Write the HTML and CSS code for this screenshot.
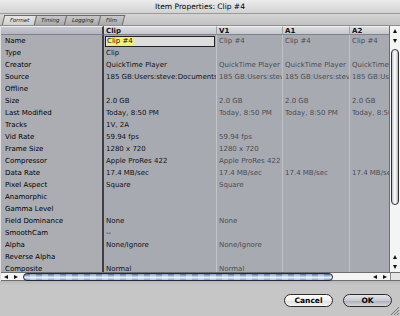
FILE: index.html
```html
<!DOCTYPE html>
<html lang="en">
<head>
    <meta charset="UTF-8">
    <title>Item Properties: Clip #4</title>
    <link rel="stylesheet" href="styles.css">
</head>
<body>
<div class="window">
    <div class="titlebar">Item Properties: Clip #4</div>

    <div class="tabbar">
        <span class="tab active">Format</span>
        <span class="tab">Timing</span>
        <span class="tab">Logging</span>
        <span class="tab">Film</span>
    </div>

    <div class="pane">
        <div class="grid-wrap">
            <div class="grid">
                <div class="hd lbl"></div>
                <div class="hd clip">Clip</div>
                <div class="hd">V1</div>
                <div class="hd">A1</div>
                <div class="hd">A2</div>

                <div class="lbl">Name</div>
                <div class="clip"><span class="field"><span class="hl">Clip #4</span></span></div>
                <div class="sub">Clip #4</div><div class="sub">Clip #4</div><div class="sub">Clip #4</div>

                <div class="lbl">Type</div>
                <div class="clip">Clip</div>
                <div class="sub"></div><div class="sub"></div><div class="sub"></div>

                <div class="lbl">Creator</div>
                <div class="clip">QuickTime Player</div>
                <div class="sub">QuickTime Player</div><div class="sub">QuickTime Player</div><div class="sub">QuickTime Player</div>

                <div class="lbl">Source</div>
                <div class="clip">185 GB:Users:steve:Documents</div>
                <div class="sub">185 GB:Users:steve:Documents</div><div class="sub">185 GB:Users:steve:Documents</div><div class="sub">185 GB:Users:steve:Documents</div>

                <div class="lbl">Offline</div>
                <div class="clip"></div>
                <div class="sub"></div><div class="sub"></div><div class="sub"></div>

                <div class="lbl">Size</div>
                <div class="clip">2.0 GB</div>
                <div class="sub">2.0 GB</div><div class="sub">2.0 GB</div><div class="sub">2.0 GB</div>

                <div class="lbl">Last Modified</div>
                <div class="clip">Today, 8:50 PM</div>
                <div class="sub">Today, 8:50 PM</div><div class="sub">Today, 8:50 PM</div><div class="sub">Today, 8:50 PM</div>

                <div class="lbl">Tracks</div>
                <div class="clip">1V, 2A</div>
                <div class="sub"></div><div class="sub"></div><div class="sub"></div>

                <div class="lbl">Vid Rate</div>
                <div class="clip">59.94 fps</div>
                <div class="sub">59.94 fps</div><div class="sub"></div><div class="sub"></div>

                <div class="lbl">Frame Size</div>
                <div class="clip">1280 x 720</div>
                <div class="sub">1280 x 720</div><div class="sub"></div><div class="sub"></div>

                <div class="lbl">Compressor</div>
                <div class="clip">Apple ProRes 422</div>
                <div class="sub">Apple ProRes 422</div><div class="sub"></div><div class="sub"></div>

                <div class="lbl">Data Rate</div>
                <div class="clip">17.4 MB/sec</div>
                <div class="sub">17.4 MB/sec</div><div class="sub">17.4 MB/sec</div><div class="sub">17.4 MB/sec</div>

                <div class="lbl">Pixel Aspect</div>
                <div class="clip">Square</div>
                <div class="sub">Square</div><div class="sub"></div><div class="sub"></div>

                <div class="lbl">Anamorphic</div>
                <div class="clip"></div>
                <div class="sub"></div><div class="sub"></div><div class="sub"></div>

                <div class="lbl">Gamma Level</div>
                <div class="clip"></div>
                <div class="sub"></div><div class="sub"></div><div class="sub"></div>

                <div class="lbl">Field Dominance</div>
                <div class="clip">None</div>
                <div class="sub">None</div><div class="sub"></div><div class="sub"></div>

                <div class="lbl">SmoothCam</div>
                <div class="clip">--</div>
                <div class="sub"></div><div class="sub"></div><div class="sub"></div>

                <div class="lbl">Alpha</div>
                <div class="clip">None/Ignore</div>
                <div class="sub">None/Ignore</div><div class="sub"></div><div class="sub"></div>

                <div class="lbl">Reverse Alpha</div>
                <div class="clip"></div>
                <div class="sub"></div><div class="sub"></div><div class="sub"></div>

                <div class="lbl">Composite</div>
                <div class="clip">Normal</div>
                <div class="sub">Normal</div><div class="sub"></div><div class="sub"></div>
            </div>

            <!-- vertical scroller, arrows at both ends -->
            <div class="vscroll">
                <span class="arrow up"></span>
                <span class="arrow down"></span>
                <span class="vthumb"></span>
                <span class="vtrack"></span>
                <span class="arrow up"></span>
                <span class="arrow down"></span>
            </div>
        </div>

        <div class="hscroll">
            <span class="harrow left"></span>
            <span class="harrow right"></span>
            <span class="hthumb"></span>
            <span class="htrack"></span>
            <span class="harrow left"></span>
            <span class="harrow right"></span>
            <span class="corner"></span>
        </div>
    </div>

    <div class="footer">
        <button class="btn">Cancel</button>
        <button class="btn default">OK</button>
        <span class="grip"></span>
    </div>
</div>
</body>
</html>
```

FILE: styles.css
```css
* { margin: 0; padding: 0; box-sizing: border-box; }
body {
    font-family: 'DejaVu Sans', Verdana, sans-serif;
    font-size: 7px;
    color: #000;
    background: #c4c4c4;
}
.window {
    width: 400px;
    height: 316px;
    display: flex;
    flex-direction: column;
    overflow: hidden;
    background: #c4c4c4;
}
.titlebar {
    height: 14px;
    line-height: 14px;
    text-align: center;
    font-size: 7.5px;
    background: linear-gradient(#ececec, #d2d2d2);
    border-bottom: 1px solid #9a9a9a;
}
.tabbar {
    height: 12px;
    display: flex;
    align-items: flex-end;
    padding-left: 3px;
    background: linear-gradient(#d4d4d4, #c2c2c2);
    border-bottom: 1px solid #8e8e8e;
}
.tab {
    height: 10px;
    line-height: 9px;
    font-size: 5.5px;
    padding: 0 6px;
    margin-right: -2px;
    color: #222;
    background: linear-gradient(#c8c8c8, #a9a9a9);
    border: 1px solid #6a6a6a;
    border-bottom: none;
    transform: skewX(-14deg);
}
.tab.active {
    background: linear-gradient(#e6e6e6, #cfcfcf);
    position: relative;
    z-index: 1;
}
.pane {
    display: flex;
    flex-direction: column;
    border-left: 1px solid #e0e0e0;
}
.grid-wrap {
    height: 246px;
    display: flex;
    overflow: hidden;
}
.grid {
    width: 389px;
    display: grid;
    grid-template-columns: 103px 113px 66px 67px 40px;
    grid-template-rows: 9px;
    grid-auto-rows: 12px;
    background: #a8aab1;
    overflow: hidden;
}
.grid > div {
    white-space: nowrap;
    overflow: hidden;
    line-height: 12px;
    padding-left: 2px;
    color: #4b4c53;
}
.grid > .lbl {
    padding-left: 4px;
    color: #000;
    background: #abadb3;
    border-right: 2px solid #3d3f45;
}
.grid > .clip { color: #111; border-right: 1px solid #c2c4ca; }
.grid > .sub { border-right: 1px solid #bfc1c7; }
.grid > .hd {
    line-height: 8px;
    font-weight: bold;
    color: #111;
    background: linear-gradient(#dcdde1, #c6c8cd);
    border-top: 1px solid #f0f0f2;
    border-bottom: 1px solid #80828a;
    border-right: 1px solid #9fa1a8;
}
.grid > .hd.lbl {
    background: linear-gradient(#c5c8cf, #b4b7bf);
    border-right: 2px solid #3d3f45;
}
.field {
    display: block;
    height: 11px;
    margin: 1px 1px 0 -1px;
    line-height: 9px;
    padding-left: 1px;
    background: #dedede;
    border: 1px solid #222;
}
.hl { background: #f4ee7a; }

.vscroll {
    width: 11px;
    display: flex;
    flex-direction: column;
    align-items: center;
    background: #f4f4f4;
    border-left: 1px solid #6e6e6e;
}
.arrow {
    width: 0;
    height: 0;
    margin: 3px 0;
    border-left: 2.5px solid transparent;
    border-right: 2.5px solid transparent;
}
.arrow.up { border-bottom: 4px solid #111; }
.arrow.down { border-top: 4px solid #111; }
.vthumb {
    width: 8px;
    height: 156px;
    margin-top: 3px;
    border: 1px solid #333;
    border-radius: 4px;
    background: linear-gradient(90deg, #bfc2c8, #fdfdfd 45%, #e8e9ec 70%, #a6a9b0);
}
.vtrack { flex: 1; }

.hscroll {
    height: 9px;
    display: flex;
    align-items: center;
    background: #f4f4f4;
    border-top: 1px solid #6e6e6e;
    border-bottom: 1px solid #6e6e6e;
}
.harrow {
    width: 0;
    height: 0;
    margin: 0 3px;
    border-top: 2.5px solid transparent;
    border-bottom: 2.5px solid transparent;
}
.harrow.left { border-right: 4px solid #111; }
.harrow.right { border-left: 4px solid #111; }
.hthumb {
    width: 310px;
    height: 8px;
    margin-left: 2px;
    border: 1px solid #1f2a3c;
    border-radius: 4px;
    background: repeating-linear-gradient(90deg, rgba(255,255,255,0) 0 6px, rgba(255,255,255,0.35) 6px 12px),
                linear-gradient(#4d6a98, #a8bfdf 35%, #e6eef8 60%, #7f9dc8);
}
.htrack { flex: 1; }
.corner {
    width: 10px;
    align-self: stretch;
    background: #e4e4e4;
    border-left: 1px solid #8a8a8a;
}

.footer {
    flex: 1;
    display: flex;
    justify-content: flex-end;
    align-items: flex-start;
    gap: 10px;
    padding: 13px 8px 0 0;
    position: relative;
    background: linear-gradient(#b8b8b8, #c6c6c6 4px);
}
.btn {
    width: 49px;
    height: 13px;
    font-family: 'DejaVu Sans', Verdana, sans-serif;
    font-size: 7.5px;
    font-weight: bold;
    color: #000;
    border: 1px solid #2c2c2c;
    border-radius: 7px;
    background: linear-gradient(#ffffff, #f0f0f0 50%, #dcdcdc 51%, #f6f6f6);
}
.btn.default {
    background: linear-gradient(#e4e6ea, #c7cad0 50%, #a9adb5 51%, #d6d8dc);
}
.grip {
    position: absolute;
    right: 1px;
    bottom: 1px;
    width: 8px;
    height: 8px;
    background: linear-gradient(135deg, transparent 0 45%, #777 45% 52%, transparent 52% 65%, #777 65% 72%, transparent 72% 85%, #777 85% 92%, transparent 92%);
}
```
